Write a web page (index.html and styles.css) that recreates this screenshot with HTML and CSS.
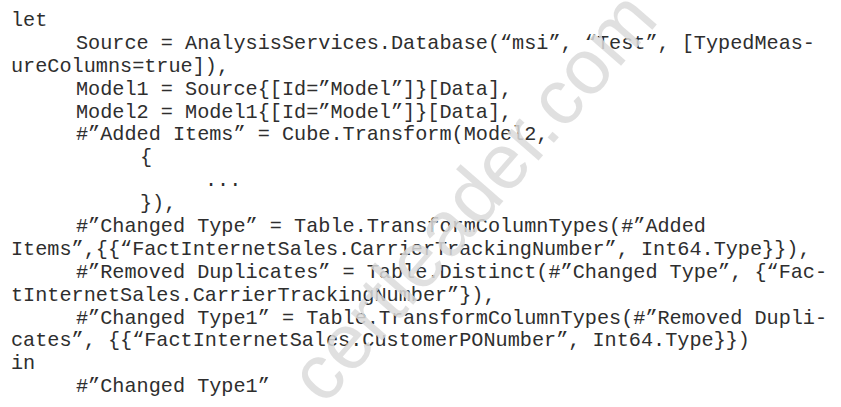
FILE: index.html
```html
<!DOCTYPE html>
<html>
<head>
<meta charset="utf-8">
<link rel="stylesheet" href="styles.css">
</head>
<body>
<div class="page">
  <div class="code">
    <div class="ln">let</div>
    <div class="ln i1">Source = AnalysisServices.Database(“msi”, “Test”, [TypedMeas-</div>
    <div class="ln">ureColumns=true]),</div>
    <div class="ln i1">Model1 = Source{[Id=”Model”]}[Data],</div>
    <div class="ln i1">Model2 = Model1{[Id=”Model”]}[Data],</div>
    <div class="ln i1">#”Added Items” = Cube.Transform(Model2,</div>
    <div class="ln i2">{</div>
    <div class="ln i3">...</div>
    <div class="ln i2">}),</div>
    <div class="ln i1">#”Changed Type” = Table.TransformColumnTypes(#”Added</div>
    <div class="ln">Items”,{{“FactInternetSales.CarrierTrackingNumber”, Int64.Type}}),</div>
    <div class="ln i1">#”Removed Duplicates” = Table.Distinct(#”Changed Type”, {“Fac-</div>
    <div class="ln">tInternetSales.CarrierTrackingNumber”}),</div>
    <div class="ln i1">#”Changed Type1” = Table.TransformColumnTypes(#”Removed Dupli-</div>
    <div class="ln">cates”, {{“FactInternetSales.CustomerPONumber”, Int64.Type}})</div>
    <div class="ln">in</div>
    <div class="ln i1">#”Changed Type1”</div>
  </div>
  <div class="watermark">certleader.com</div>
</div>
</body>
</html>
```

FILE: styles.css
```css
html, body {
  margin: 0;
  padding: 0;
  background: #ffffff;
}

.page {
  position: relative;
  width: 841px;
  height: 407px;
  overflow: hidden;
  background: #ffffff;
}

.code {
  padding: 10px 0 0 11px;
  font-family: "Liberation Mono", "Courier New", monospace;
  font-size: 20.2px;
  line-height: 22.9px;
  color: #2e2e2e;
}

.ln {
  white-space: pre;
  height: 22.9px;
}

.ln.i1 { padding-left: 65px; }
.ln.i2 { padding-left: 129px; }
.ln.i3 { padding-left: 194px; }

.watermark {
  position: absolute;
  left: 472px;
  top: 196px;
  transform: translate(-50%, -50%) rotate(-49deg);
  font-family: "Liberation Sans", Arial, sans-serif;
  font-size: 78px;
  line-height: 1;
  color: rgba(218, 218, 218, 0.85);
  white-space: nowrap;
}
```
